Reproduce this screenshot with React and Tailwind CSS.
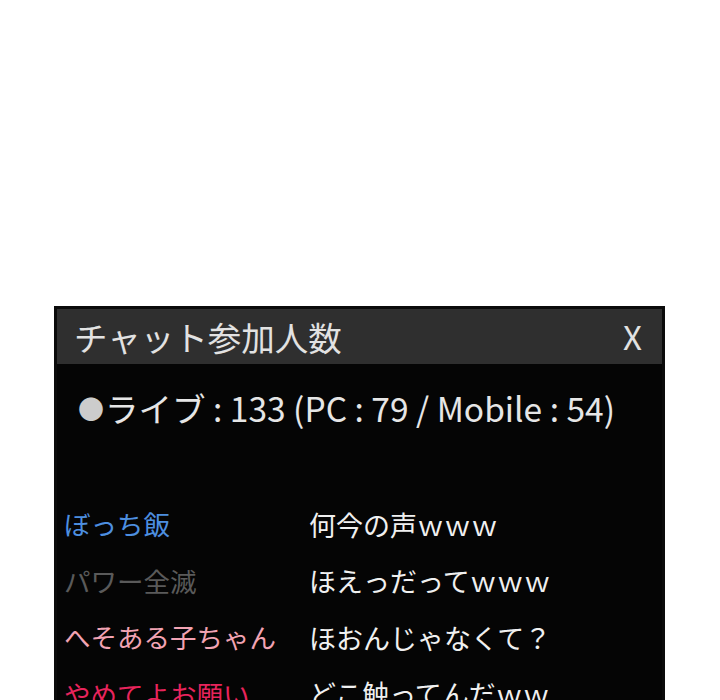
export default function App() {
  const font = { fontFamily: '"Noto Sans CJK JP", "Noto Sans", sans-serif' };
  const rows = [
    { name: "ぼっち飯", color: "text-[#4d8fe0]", msg: "何今の声ｗｗｗ" },
    { name: "パワー全滅", color: "text-[#5a5a5a]", msg: "ほえっだってｗｗｗ" },
    { name: "へそある子ちゃん", color: "text-[#f2a3b3]", msg: "ほおんじゃなくて？" },
    { name: "やめてよお願い", color: "text-[#e8245c]", msg: "どこ触ってんだｗｗ" },
  ];
  return (
    <div className="w-[720px] h-[700px] bg-white overflow-hidden" style={font}>
      <div className="h-[306px]" />
      <div className="ml-[54px] w-[611px] h-[394px] border-[3px] border-b-0 border-[#0b0b0b] bg-[#050505] overflow-hidden">
        <div className="h-[55px] bg-[#2f2f2f] flex items-center justify-between pl-[17px] pr-[20px] text-[#e2e2e2]">
          <span className="text-[33.5px] leading-none">チャット参加人数</span>
          <span className="text-[33px] leading-none">X</span>
        </div>
        <div className="pt-[16px] pl-[21px] h-[72px]">
          <div className="h-[56px] flex items-center text-[#e6e6e6] leading-none">
            <span className="w-[27px] text-[26px] text-[#cccccc]">●</span>
            <span className="text-[33.5px]">ライブ : 133 (PC : 79 / Mobile : 54)</span>
          </div>
        </div>
        <div className="pt-[60px] pl-[7px]">
          {rows.map((r) => (
            <div key={r.name} className="h-[56.5px] flex items-center leading-none">
              <span className={`w-[245px] shrink-0 text-[26.5px] ${r.color}`}>{r.name}</span>
              <span className="text-[27px] text-[#f0f0f0]">{r.msg}</span>
            </div>
          ))}
        </div>
      </div>
    </div>
  );
}
